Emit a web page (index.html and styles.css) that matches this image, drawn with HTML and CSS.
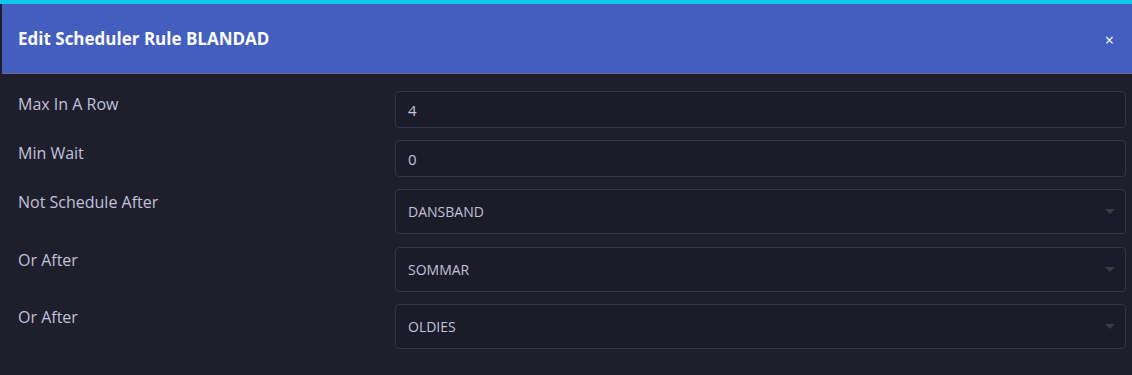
FILE: index.html
```html
<!DOCTYPE html>
<html lang="en">
<head>
  <meta charset="UTF-8" />
  <meta name="viewport" content="width=device-width, initial-scale=1.0" />
  <title>Edit Scheduler Rule</title>
  <link rel="stylesheet" href="styles.css">
</head>
<body>
  <div class="topbar"></div>

  <div class="modal">
    <div class="modal-header">
      <h5>Edit Scheduler Rule BLANDAD</h5>
      <span class="close">&times;</span>
    </div>

    <div class="modal-body">
      <div class="form-row">
        <label>Max In A Row</label>
        <div class="field">4</div>
      </div>
      <div class="form-row">
        <label>Min Wait</label>
        <div class="field">0</div>
      </div>
      <div class="form-row wide">
        <label>Not Schedule After</label>
        <div class="field select">DANSBAND<span class="caret"></span></div>
      </div>
      <div class="form-row wide">
        <label>Or After</label>
        <div class="field select">SOMMAR<span class="caret"></span></div>
      </div>
      <div class="form-row wide">
        <label>Or After</label>
        <div class="field select">OLDIES<span class="caret"></span></div>
      </div>
    </div>
  </div>
</body>
</html>
```

FILE: styles.css
```css
body {
  margin: 0;
  font-family: "Open Sans", "Noto Sans", sans-serif;
  background: #1e1e2d;
  color: #c2c2d9;
  overflow: hidden;
}
.topbar {
  height: 4px;
  background: #11c6ea;
}
.modal {
  margin-left: 2px;
  background: #1e1e2d;
}
.modal-header {
  height: 69px;
  background: #435ebe;
  border-bottom: 1px solid #6b6d80;
  display: flex;
  align-items: center;
  justify-content: space-between;
  padding: 0 18px 0 16px;
}
.modal-header h5 {
  margin: 0;
  font-size: 17px;
  font-weight: 700;
  color: #fff;
}
.close {
  color: #fff;
  font-size: 16px;
  line-height: 1;
  margin-top: 2px;
}
.modal-body {
  padding: 17px 6px 0 16px;
}
.form-row {
  display: grid;
  grid-template-columns: 377px 1fr;
  margin-bottom: 12px;
}
.form-row.wide {
  margin-bottom: 12.5px;
}
.form-row label {
  font-size: 16px;
  line-height: 22px;
  padding-top: 2px;
}
.field {
  height: 35px;
  display: flex;
  align-items: center;
  padding: 0 12px;
  background: #1b1b29;
  border: 1px solid #35354f;
  border-radius: 4px;
  font-size: 15px;
  color: #c2c2d9;
}
.field.select {
  height: 43px;
  font-size: 14px;
  justify-content: space-between;
}
.caret {
  width: 0;
  height: 0;
  border-left: 5px solid transparent;
  border-right: 5px solid transparent;
  border-top: 5px solid #3d3d3c;
  margin-right: -2px;
}
```
